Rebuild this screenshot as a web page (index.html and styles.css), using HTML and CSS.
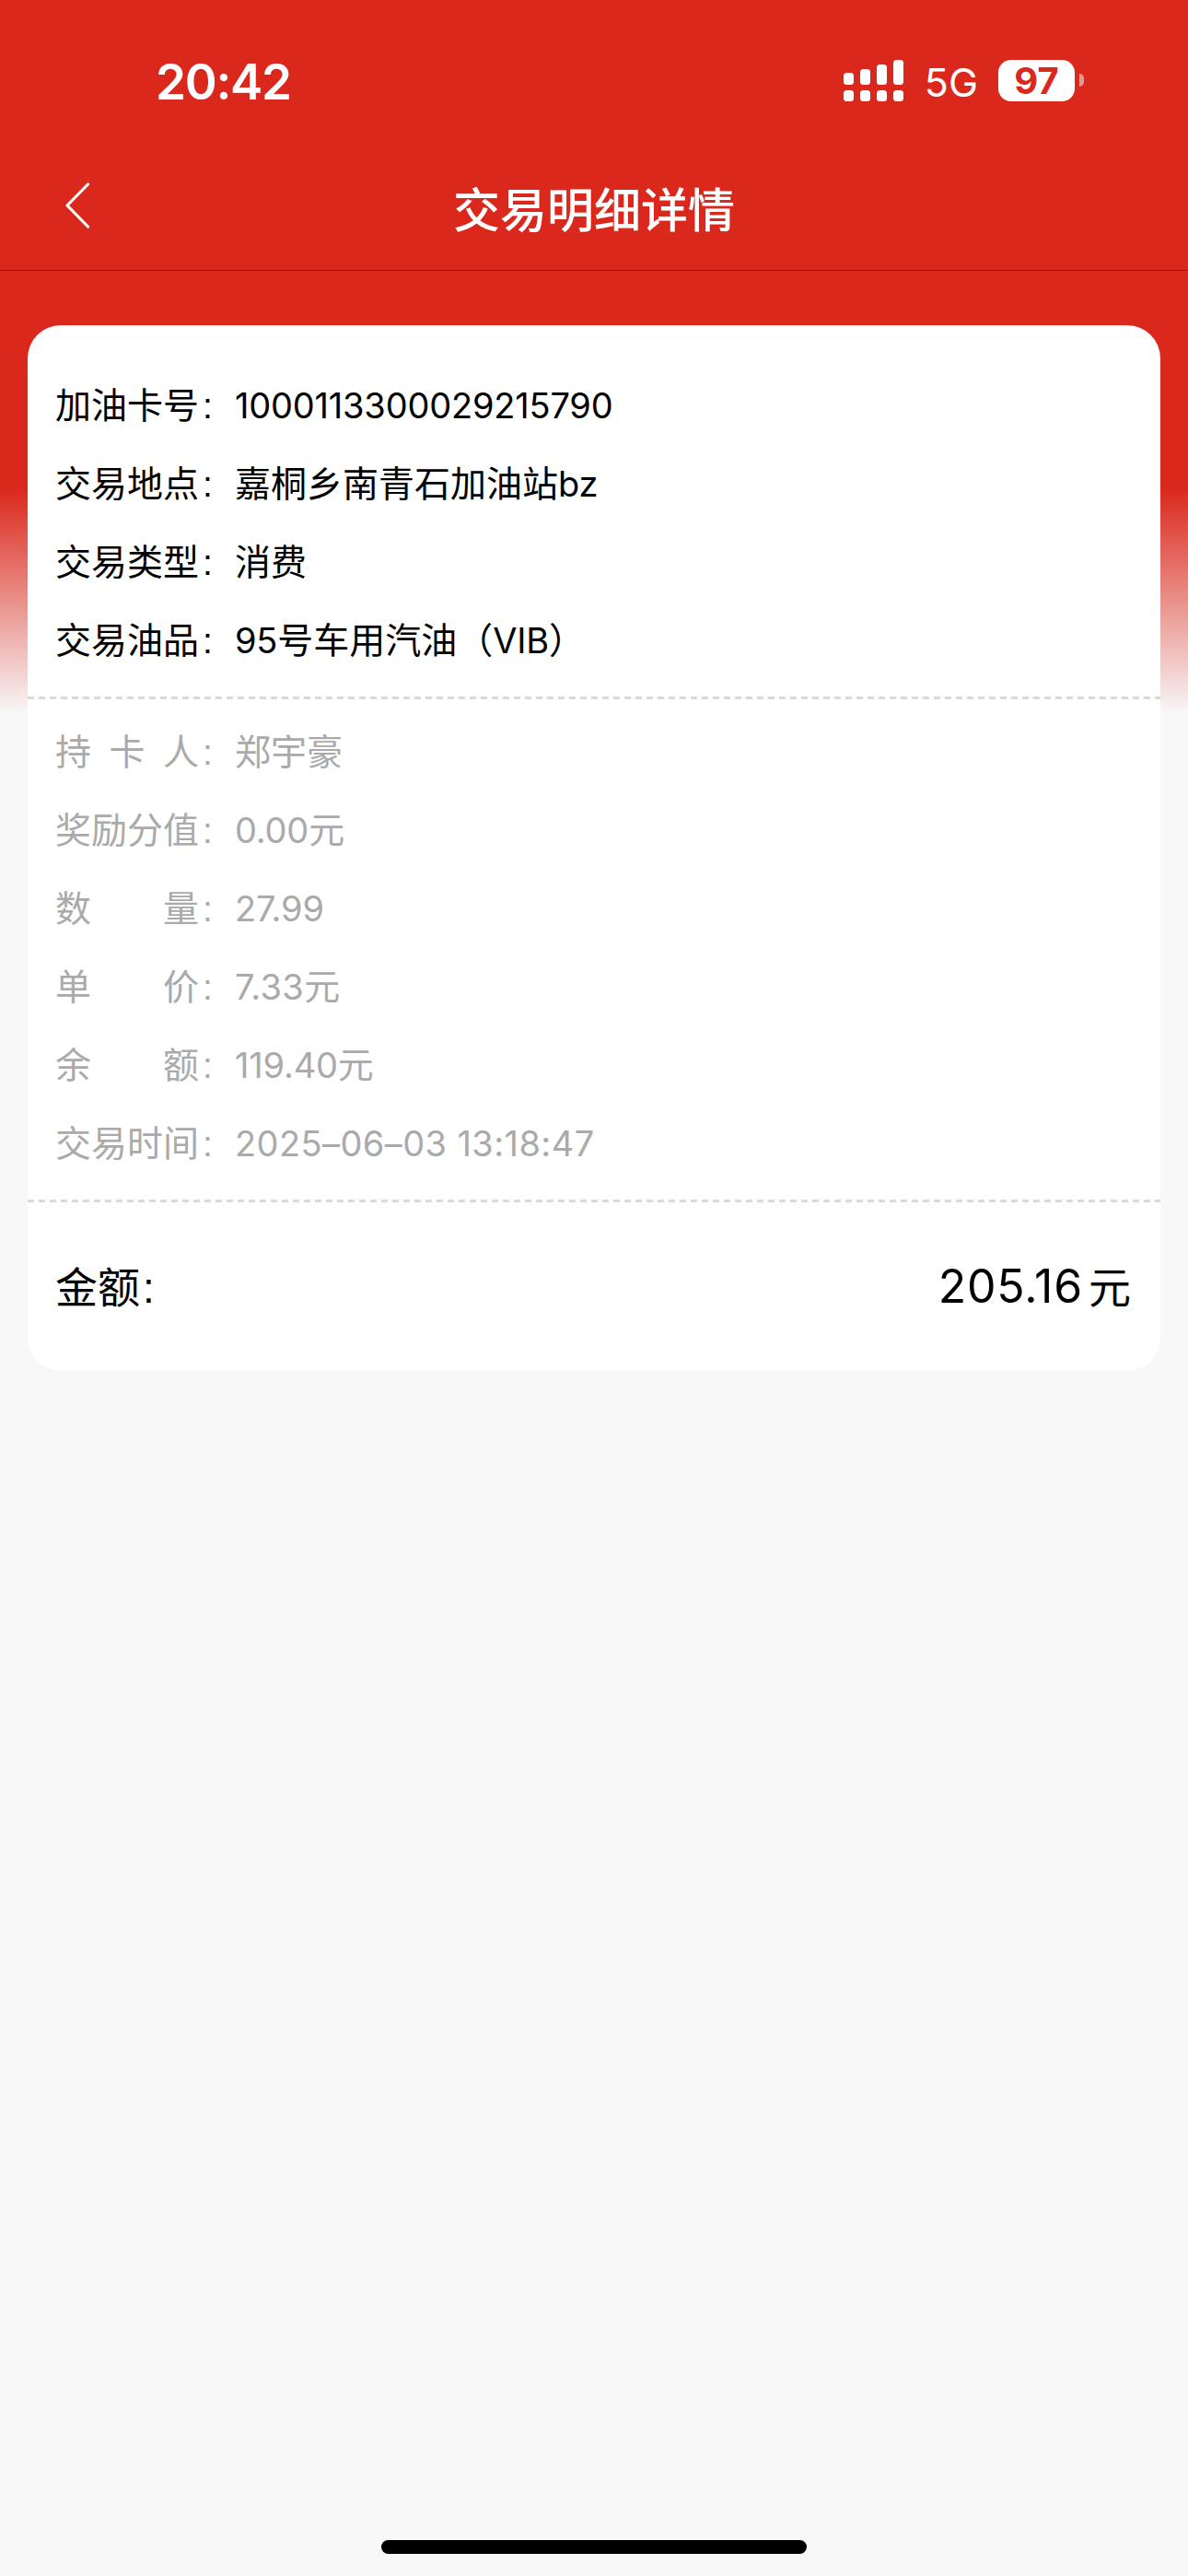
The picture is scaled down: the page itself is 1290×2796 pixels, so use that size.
FILE: index.html
```html
<!DOCTYPE html>
<html lang="zh-CN">

<head>
    <meta charset="UTF-8">
    <meta name="viewport" content="width=device-width, initial-scale=1.0">
    <title>交易明细详情</title>
    <link rel="stylesheet" href="styles.css">
</head>

<body>
    <div class="page">
        <!-- status bar -->
        <div class="status-bar">
            <span class="clock">20:42</span>
            <div class="status-icons">
                <svg class="signal" width="66" height="45" viewBox="0 0 66 45" fill="#fff">
                    <rect x="0" y="14" width="11" height="13" rx="3.5" />
                    <rect x="18" y="10" width="11" height="17" rx="3.5" />
                    <rect x="36" y="5" width="11" height="22" rx="3.5" />
                    <rect x="54" y="0" width="11" height="27" rx="3.5" />
                    <rect x="0" y="33" width="11" height="12" rx="3.5" />
                    <rect x="18" y="33" width="11" height="12" rx="3.5" />
                    <rect x="36" y="33" width="11" height="12" rx="3.5" />
                    <rect x="54" y="33" width="11" height="12" rx="3.5" />
                </svg>
                <span class="network">5G</span>
                <div class="battery"><span class="battery-level">97</span></div>
                <span class="battery-nub"></span>
            </div>
        </div>

        <!-- nav -->
        <div class="nav-bar">
            <svg class="back-icon" width="28" height="50" viewBox="0 0 28 50" fill="none" stroke="#fff"
                stroke-width="3.2" stroke-linecap="round" stroke-linejoin="round">
                <path d="M25.5 2 L3 25 L25.5 48" />
            </svg>
            <h1 class="nav-title">交易明细详情</h1>
        </div>

        <div class="detail-card">
            <div class="card-section main-info">
                <div class="info-row"><span class="info-label">加油卡号</span><span class="info-colon">:</span><span class="info-value"><span class="num">1000113300029215790</span></span></div>
                <div class="info-row"><span class="info-label">交易地点</span><span class="info-colon">:</span><span class="info-value">嘉桐乡南青石加油站<span class="num">bz</span></span></div>
                <div class="info-row"><span class="info-label">交易类型</span><span class="info-colon">:</span><span class="info-value">消费</span></div>
                <div class="info-row"><span class="info-label">交易油品</span><span class="info-colon">:</span><span class="info-value"><span class="num">95</span>号车用汽油（<span class="num">VIB</span>）</span></div>
            </div>

            <div class="dash-line"></div>

            <div class="card-section sub-info">
                <div class="info-row"><span class="info-label">持 卡 人</span><span class="info-colon">:</span><span class="info-value">郑宇豪</span></div>
                <div class="info-row"><span class="info-label">奖励分值</span><span class="info-colon">:</span><span class="info-value"><span class="num">0.00</span>元</span></div>
                <div class="info-row"><span class="info-label">数 量</span><span class="info-colon">:</span><span class="info-value"><span class="num">27.99</span></span></div>
                <div class="info-row"><span class="info-label">单 价</span><span class="info-colon">:</span><span class="info-value"><span class="num num-wide">7.33</span>元</span></div>
                <div class="info-row"><span class="info-label">余 额</span><span class="info-colon">:</span><span class="info-value"><span class="num">119.40</span>元</span></div>
                <div class="info-row"><span class="info-label">交易时间</span><span class="info-colon">:</span><span class="info-value"><span class="num num-wide">2025–06–03 13:18:47</span></span></div>
            </div>

            <div class="dash-line"></div>

            <div class="amount-row">
                <span class="amount-label">金额<span class="amount-colon">:</span></span>
                <span class="amount-value"><span class="amount-num">205.16</span><span class="amount-unit">元</span></span>
            </div>
        </div>

        <div class="home-bar"></div>
    </div>
</body>

</html>
```

FILE: styles.css
```css
* {
    padding: 0;
    margin: 0;
    box-sizing: border-box;
    font-family: "Liberation Sans", "Noto Sans CJK SC", sans-serif;
}

body {
    background: #f8f8f8;
}

.page {
    display: flex;
    flex-direction: column;
    height: 2796px;
    overflow: hidden;
    background: linear-gradient(#db281c 0, #db281c 530px, #f8f8f8 775px);
}

.status-bar {
    display: flex;
    justify-content: space-between;
    align-items: center;
    height: 130px;
    padding: 44px 113px 0 169px;
    color: #fff;
}

.clock {
    font-family: "Inter", sans-serif;
    font-size: 53px;
    font-weight: 600;
    letter-spacing: -1.3px;
    padding-top: 3px;
}

.status-icons {
    display: flex;
    align-items: center;
}

.signal {
    margin-right: 22px;
}

.network {
    font-family: "Inter", sans-serif;
    font-size: 43px;
    margin-right: 22px;
    padding-top: 4px;
}

.battery {
    display: flex;
    justify-content: center;
    align-items: center;
    width: 83px;
    height: 45px;
    background: #fff;
    border-radius: 14px;
}

.battery-level {
    font-family: "Inter", sans-serif;
    font-size: 40px;
    font-weight: 700;
    color: #db281c;
}

.battery-nub {
    width: 5px;
    height: 14px;
    margin-left: 5px;
    background: rgba(255, 255, 255, 0.5);
    border-radius: 0 7px 7px 0;
}

.nav-bar {
    position: relative;
    display: flex;
    justify-content: center;
    align-items: center;
    height: 164px;
    padding-top: 26px;
    border-bottom: 1px solid #8f1a12;
}

.back-icon {
    position: absolute;
    left: 70px;
    top: 68px;
}

.nav-title {
    font-size: 51px;
    font-weight: 500;
    color: #fff;
}

.detail-card {
    width: 1230px;
    margin: 59px auto 0;
    background: #fff;
    border-radius: 36px;
}

.main-info {
    padding: 45px 30px 18px;
    color: #000;
}

.sub-info {
    padding: 15px 30px 18px;
    color: #aaa;
}

.info-row {
    display: flex;
    height: 85px;
    line-height: 85px;
    font-size: 39px;
    white-space: nowrap;
}

.info-label {
    width: 156px;
    text-align: justify;
    text-align-last: justify;
}

.info-colon {
    width: 39px;
    padding-left: 4px;
}

.num {
    font-family: "Inter", sans-serif;
    font-size: 38px;
    letter-spacing: -0.2px;
}

.num-wide {
    letter-spacing: 0.4px;
}

.dash-line {
    height: 3px;
    background: repeating-linear-gradient(90deg, #d9d9d9 0, #d9d9d9 7px, transparent 7px, transparent 12px);
}

.amount-row {
    display: flex;
    justify-content: space-between;
    align-items: center;
    height: 183px;
    padding: 0 32px 6px 30px;
    color: #000;
}

.amount-label {
    font-size: 46px;
}

.amount-colon {
    margin-left: 3px;
}

.amount-num {
    font-family: "Inter", sans-serif;
    font-size: 50px;
    letter-spacing: 0.8px;
}

.amount-unit {
    font-size: 46px;
    margin-left: 6px;
}

.home-bar {
    width: 462px;
    height: 15px;
    margin: auto auto 24px;
    background: #000;
    border-radius: 8px;
}
```
